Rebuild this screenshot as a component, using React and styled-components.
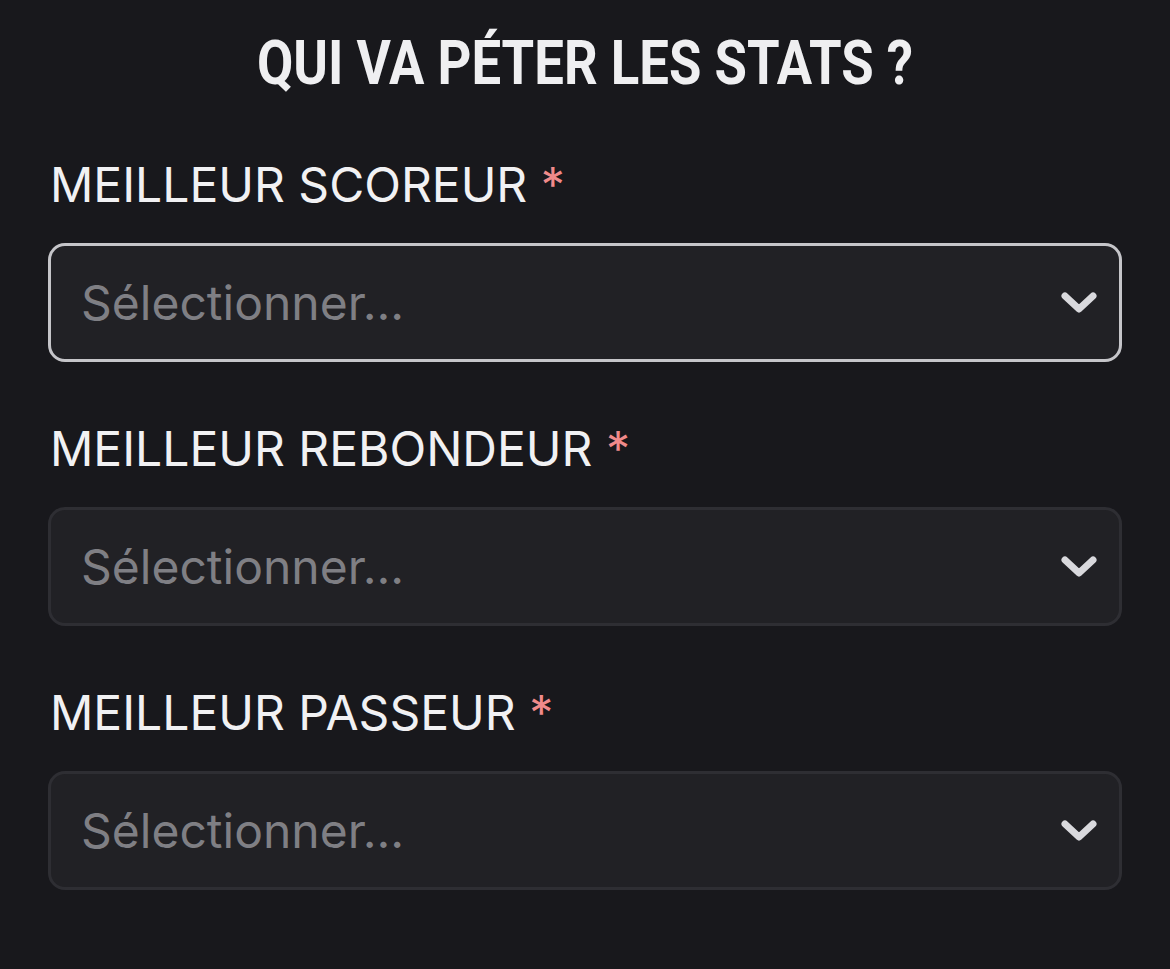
import React from 'react';
import styled, { createGlobalStyle } from 'styled-components';

const GlobalStyle = createGlobalStyle`
  html, body {
    margin: 0;
    padding: 0;
    background: #18181c;
  }
  body {
    font-family: Inter, "Noto Sans", sans-serif;
    -webkit-font-smoothing: antialiased;
  }
`;

const fields = [
  { id: 'scorer', label: 'MEILLEUR SCOREUR', focused: true },
  { id: 'rebounder', label: 'MEILLEUR REBONDEUR' },
  { id: 'passer', label: 'MEILLEUR PASSEUR' },
];

const Chevron = () => (
  <svg width="36" height="22" viewBox="0 0 36 22" fill="none">
    <path
      d="M4 4 L18 17 L32 4"
      stroke="#d9d9dd"
      strokeWidth="7"
      strokeLinecap="round"
      strokeLinejoin="round"
    />
  </svg>
);

const App = () => {
  return (
    <Page>
      <GlobalStyle />
      <TitleRow>
        <Title>QUI VA PÉTER LES STATS ?</Title>
      </TitleRow>
      <Form>
        {fields.map((f) => (
          <Field key={f.id}>
            <Label>
              {f.label} <Required>*</Required>
            </Label>
            <Select focused={f.focused}>
              <Placeholder>Sélectionner...</Placeholder>
              <Chevron />
            </Select>
          </Field>
        ))}
      </Form>
    </Page>
  );
};

const Page = styled.div`
  min-height: 969px;
  background: #18181c;
  padding: 0 48px;
  box-sizing: border-box;
`;

const TitleRow = styled.div`
  display: flex;
  justify-content: center;
  padding-top: 29px;
`;

const Title = styled.h1`
  margin: 0;
  font-family: Roboto, "Liberation Sans", sans-serif;
  font-weight: 700;
  font-size: 62px;
  line-height: 68px;
  color: #efeff1;
  white-space: nowrap;
  transform: scaleX(0.85);
`;

const Form = styled.div`
  display: flex;
  flex-direction: column;
  gap: 63px;
  margin-top: 64px;
`;

const Field = styled.div`
  display: flex;
  flex-direction: column;
  gap: 34px;
`;

const Label = styled.div`
  font-size: 48px;
  line-height: 48px;
  font-weight: 400;
  color: #f1f1f3;
  padding-left: 2px;
`;

const Required = styled.span`
  color: #f08a8a;
`;

const Select = styled.div`
  display: flex;
  align-items: center;
  justify-content: space-between;
  height: 119px;
  box-sizing: border-box;
  padding: 0 22px 0 30px;
  background: #212125;
  border: 3px solid ${(p) => (p.focused ? '#c5c5c9' : '#2e2e33')};
  border-radius: 17px;
`;

const Placeholder = styled.span`
  font-size: 48px;
  color: #7f7f84;
`;

export default App;
